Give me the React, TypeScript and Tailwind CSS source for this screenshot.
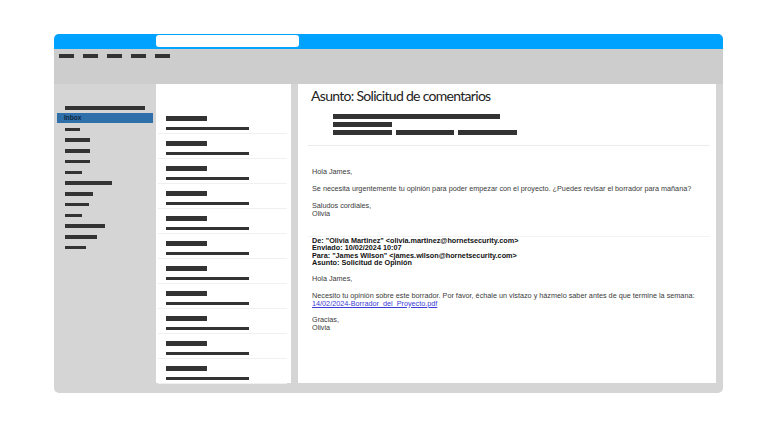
import React from "react";

const sideDashes = [15, 25, 25, 25, 17, 47, 28, 24, 17, 40, 32, 21];
const toolDashes = [0, 1, 2, 3, 4];
const items = Array.from({ length: 11 }, (_, i) => i);

export default function App() {
  return (
    <div className="w-[768px] h-[432px] bg-white pt-[34px] pl-[54px]">
      <div className="w-[669px] h-[359px] rounded-[5px] overflow-hidden bg-[#d5d5d5] flex flex-col">
        {/* Blue title bar */}
        <div className="h-[15px] bg-[#00a2ff] pt-[1px] pl-[102px]">
          <div className="w-[143px] h-[12px] rounded-[3px] bg-white" />
        </div>
        {/* Toolbar */}
        <div className="h-[35px] bg-[#cdcdcd] pl-[5px] pt-[5px] flex gap-[9px] items-start">
          {toolDashes.map((i) => (
            <div key={i} className="w-[15px] h-[3.5px] bg-[#333333]" />
          ))}
        </div>
        {/* Body */}
        <div className="flex flex-1 min-h-0">
          {/* Sidebar */}
          <div className="w-[102px] pt-[22px] flex flex-col">
            <div className="ml-[11px] w-[80px] h-[3.5px] bg-[#333333]" />
            <div className="mt-[3.5px] ml-[3px] w-[96px] h-[10px] bg-[#2f70aa] flex items-center pl-[7px]">
              <span
                className="text-[6.5px] font-bold text-[#0d2740] leading-none"
                style={{ fontFamily: '"Liberation Sans", Arial, sans-serif' }}
              >
                Inbox
              </span>
            </div>
            <div className="mt-[4.5px] ml-[11px] flex flex-col gap-[7.25px]">
              {sideDashes.map((w, i) => (
                <div key={i} className="h-[3.5px] bg-[#333333]" style={{ width: w }} />
              ))}
            </div>
          </div>
          {/* Message list */}
          <div className="w-[135px] h-[299px] bg-white pt-[25px]">
            {items.map((i) => (
              <div
                key={i}
                className="ml-[2px] mr-[4px] h-[25px] border-b border-[#f0f0f0] pl-[8px] pt-[7px] flex flex-col"
              >
                <div className="w-[41px] h-[5px] bg-[#333333]" />
                <div className="mt-[6px] w-[83px] h-[3px] bg-[#333333]" />
              </div>
            ))}
          </div>
          {/* Reading pane */}
          <div className="ml-[7px] w-[418px] h-[299px] bg-white flex flex-col">
            <div
              className="pl-[13px] pt-[4px] text-[14px] leading-[16px] tracking-[-0.7px] text-[#222222]"
              style={{ fontFamily: "Lato, sans-serif" }}
            >
              Asunto: Solicitud de comentarios
            </div>
            <div className="mt-[10px] pl-[35px] flex flex-col gap-[3px]">
              <div className="w-[167px] h-[5px] bg-[#333333]" />
              <div className="w-[59px] h-[5px] bg-[#333333]" />
              <div className="flex gap-[4px]">
                <div className="w-[59px] h-[5px] bg-[#333333]" />
                <div className="w-[58px] h-[5px] bg-[#333333]" />
                <div className="w-[59px] h-[5px] bg-[#333333]" />
              </div>
            </div>
            <div className="mt-[10px] mx-[10px] mr-[6px] h-px bg-[#ececec]" />
            <div
              className="pl-[14px] text-[7.25px] leading-[8px] text-[#3a3a3a]"
              style={{ fontFamily: '"Liberation Sans", Arial, sans-serif' }}
            >
              <p className="mt-[22px]">Hola James,</p>
              <p className="mt-[8.5px]">
                Se necesita urgentemente tu opinión para poder empezar con el proyecto. ¿Puedes revisar el borrador para mañana?
              </p>
              <p className="mt-[9px]">
                Saludos cordiales,
                <br />
                Olivia
              </p>
            </div>
            <div className="mt-[18px] mx-[10px] mr-[6px] h-px bg-[#f3f3f3]" />
            <div
              className="pl-[14px] text-[7.25px] leading-[7.5px] font-bold text-[#111111]"
              style={{ fontFamily: '"Liberation Sans", Arial, sans-serif' }}
            >
              <div>De: "Olivia Martinez" &lt;olivia.martinez@hornetsecurity.com&gt;</div>
              <div>Enviado: 10/02/2024 10:07</div>
              <div>Para: "James Wilson" &lt;james.wilson@hornetsecurity.com&gt;</div>
              <div>Asunto: Solicitud de Opinión</div>
            </div>
            <div
              className="pl-[14px] text-[7.25px] leading-[8px] text-[#3a3a3a]"
              style={{ fontFamily: '"Liberation Sans", Arial, sans-serif' }}
            >
              <p className="mt-[8px]">Hola James,</p>
              <p className="mt-[9px]">
                Necesito tu opinión sobre este borrador. Por favor, échale un vistazo y házmelo saber antes de que termine la semana:
                <br />
                <span className="text-[#3b3bd6] underline">14/02/2024-Borrador_del_Proyecto.pdf</span>
              </p>
              <p className="mt-[8px]">
                Gracias,
                <br />
                Olivia
              </p>
            </div>
          </div>
        </div>
      </div>
    </div>
  );
}
